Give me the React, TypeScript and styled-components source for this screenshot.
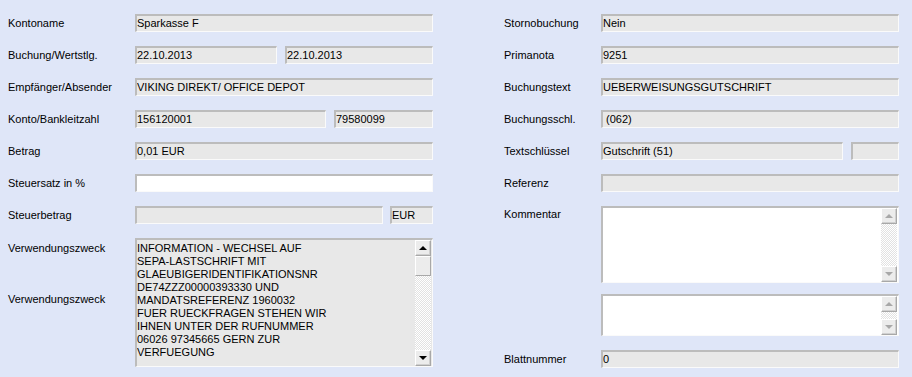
import React from 'react';
import styled, { createGlobalStyle } from 'styled-components';

const GlobalStyle = createGlobalStyle`
  html, body {
    margin: 0;
    padding: 0;
    background: #dfe6f8;
    overflow: hidden;
  }
  body {
    font-family: 'Liberation Sans', Arial, sans-serif;
    font-size: 11px;
    color: #000;
  }
`;

const Form = styled.div`
  display: grid;
  grid-template-columns: 425px 395px;
  column-gap: 71px;
  align-items: start;
  padding: 14px 0 0 8px;
  width: 912px;
  height: 377px;
  box-sizing: border-box;
`;

const Column = styled.div`
  display: flex;
  flex-direction: column;
  gap: 14px;
`;

const Row = styled.div<{ $top?: boolean; $shift?: number }>`
  display: flex;
  align-items: ${(p) => (p.$top ? 'flex-start' : 'center')};
  margin-top: ${(p) => p.$shift ?? 0}px;
`;

const Label = styled.div<{ $width: number; $pad?: number }>`
  flex: 0 0 ${(p) => p.$width}px;
  line-height: 13px;
  padding-top: ${(p) => p.$pad ?? 0}px;
  white-space: nowrap;
`;

const LabelStack = styled.div<{ $width: number }>`
  flex: 0 0 ${(p) => p.$width}px;
  display: flex;
  flex-direction: column;
  gap: 38px;
  padding-top: 4px;
  line-height: 13px;
`;

const Fields = styled.div<{ $gap?: number }>`
  flex: 1;
  display: flex;
  gap: ${(p) => p.$gap ?? 8}px;
  min-width: 0;
`;

const Field = styled.div<{ $width?: number; $white?: boolean }>`
  ${(p) => (p.$width ? `flex: 0 0 ${p.$width}px;` : 'flex: 1;')}
  height: 18px;
  box-sizing: border-box;
  border-top: 2px solid #bcbcbc;
  border-left: 2px solid #bcbcbc;
  border-bottom: 1px solid #fafafa;
  border-right: 1px solid #fafafa;
  background: ${(p) => (p.$white ? '#fff' : '#e8e8e8')};
  line-height: 14px;
  white-space: pre;
  overflow: hidden;
`;

const TextBox = styled.div<{ $white?: boolean; $h: number }>`
  flex: 1;
  height: ${(p) => p.$h}px;
  box-sizing: border-box;
  display: flex;
  border-top: 2px solid #bcbcbc;
  border-left: 2px solid #bcbcbc;
  border-bottom: 1px solid #fafafa;
  border-right: 1px solid #fafafa;
  background: ${(p) => (p.$white ? '#fff' : '#e8e8e8')};
`;

const TextContent = styled.div`
  flex: 1;
  padding-top: 2px;
  line-height: 13px;
  white-space: pre;
  overflow: hidden;
`;

const ScrollBar = styled.div`
  flex: 0 0 16px;
  display: flex;
  flex-direction: column;
  margin-right: 1px;
`;

const ScrollButton = styled.div`
  flex: 0 0 16px;
  box-sizing: border-box;
  display: flex;
  align-items: center;
  justify-content: center;
  background: #ececec;
  border-top: 1px solid #fff;
  border-left: 1px solid #fff;
  border-bottom: 1px solid #a8a8a8;
  border-right: 1px solid #a8a8a8;
  box-shadow: inset -1px -1px 0 #d0d0d0;
`;

const Arrow = styled.span<{ $down?: boolean; $disabled?: boolean }>`
  width: 0;
  height: 0;
  border-left: 4px solid transparent;
  border-right: 4px solid transparent;
  ${(p) =>
    p.$down
      ? `border-top: 4px solid ${p.$disabled ? '#a8a8a8' : '#000'};`
      : `border-bottom: 4px solid ${p.$disabled ? '#a8a8a8' : '#000'};`}
`;

const Thumb = styled.div`
  flex: 0 0 20px;
  box-sizing: border-box;
  background: #ececec;
  border-top: 1px solid #fff;
  border-left: 1px solid #fff;
  border-bottom: 1px solid #a8a8a8;
  border-right: 1px solid #a8a8a8;
`;

const Track = styled.div`
  flex: 1;
  background: repeating-conic-gradient(#fff 0 25%, #e2e2e2 0 50%) 0 0 / 2px 2px;
`;

const Scroll = ({ disabled }: { disabled?: boolean }) => (
  <ScrollBar>
    <ScrollButton>
      <Arrow $disabled={disabled} />
    </ScrollButton>
    {!disabled && <Thumb />}
    <Track />
    <ScrollButton>
      <Arrow $down $disabled={disabled} />
    </ScrollButton>
  </ScrollBar>
);

const purpose = [
  'INFORMATION - WECHSEL AUF',
  'SEPA-LASTSCHRIFT MIT',
  'GLAEUBIGERIDENTIFIKATIONSNR',
  'DE74ZZZ00000393330 UND',
  'MANDATSREFERENZ 1960032',
  'FUER RUECKFRAGEN STEHEN WIR',
  'IHNEN UNTER DER RUFNUMMER',
  '06026 97345665 GERN ZUR',
  'VERFUEGUNG',
].join('\n');

const L = 127;
const R = 97;

export default function App() {
  return (
    <>
      <GlobalStyle />
      <Form>
        <Column>
          <Row>
            <Label $width={L}>Kontoname</Label>
            <Field>Sparkasse F</Field>
          </Row>
          <Row>
            <Label $width={L}>Buchung/Wertstlg.</Label>
            <Fields>
              <Field>22.10.2013</Field>
              <Field $width={148}>22.10.2013</Field>
            </Fields>
          </Row>
          <Row>
            <Label $width={L}>Empfänger/Absender</Label>
            <Field>VIKING DIREKT/ OFFICE DEPOT</Field>
          </Row>
          <Row>
            <Label $width={L}>Konto/Bankleitzahl</Label>
            <Fields>
              <Field>156120001</Field>
              <Field $width={99}>79580099</Field>
            </Fields>
          </Row>
          <Row>
            <Label $width={L}>Betrag</Label>
            <Field>0,01 EUR</Field>
          </Row>
          <Row>
            <Label $width={L}>Steuersatz in %</Label>
            <Field $white />
          </Row>
          <Row>
            <Label $width={L}>Steuerbetrag</Label>
            <Fields $gap={7}>
              <Field />
              <Field $width={43}>EUR</Field>
            </Fields>
          </Row>
          <Row $top>
            <LabelStack $width={L}>
              <span>Verwendungszweck</span>
              <span>Verwendungszweck</span>
            </LabelStack>
            <TextBox $h={129}>
              <TextContent>{purpose}</TextContent>
              <Scroll />
            </TextBox>
          </Row>
        </Column>

        <Column>
          <Row>
            <Label $width={R}>Stornobuchung</Label>
            <Field>Nein</Field>
          </Row>
          <Row>
            <Label $width={R}>Primanota</Label>
            <Field>9251</Field>
          </Row>
          <Row>
            <Label $width={R}>Buchungstext</Label>
            <Field>UEBERWEISUNGSGUTSCHRIFT</Field>
          </Row>
          <Row>
            <Label $width={R}>Buchungsschl.</Label>
            <Field>{' (062)'}</Field>
          </Row>
          <Row>
            <Label $width={R}>Textschlüssel</Label>
            <Fields>
              <Field>Gutschrift (51)</Field>
              <Field $width={48} />
            </Fields>
          </Row>
          <Row>
            <Label $width={R}>Referenz</Label>
            <Field />
          </Row>
          <Row $top>
            <Label $width={R} $pad={2}>Kommentar</Label>
            <TextBox $white $h={77}>
              <TextContent />
              <Scroll disabled />
            </TextBox>
          </Row>
          <Row $top $shift={-3}>
            <Label $width={R} />
            <TextBox $white $h={42}>
              <TextContent />
              <Scroll disabled />
            </TextBox>
          </Row>
          <Row>
            <Label $width={R}>Blattnummer</Label>
            <Field>0</Field>
          </Row>
        </Column>
      </Form>
    </>
  );
}
